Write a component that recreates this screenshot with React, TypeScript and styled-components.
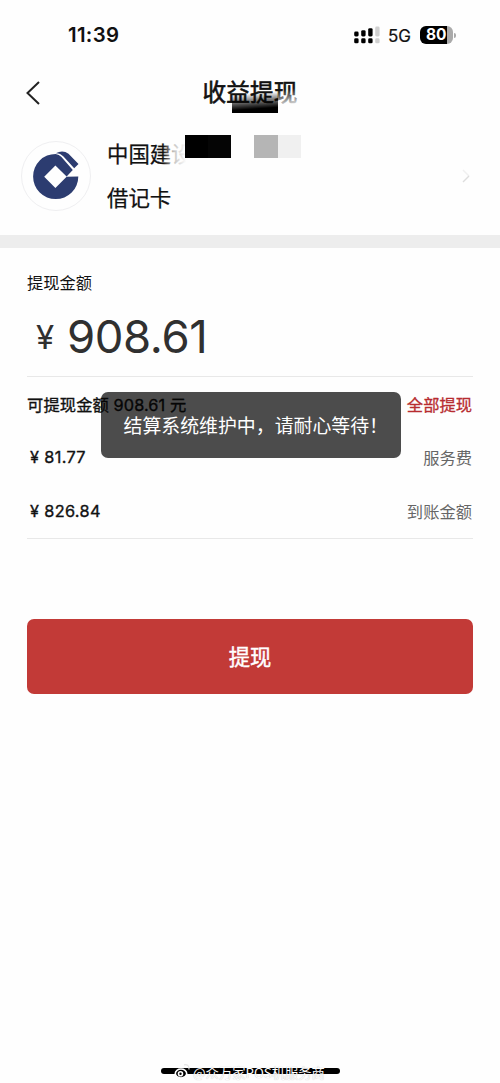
import React from "react";
import styled, { createGlobalStyle } from "styled-components";

const GlobalStyle = createGlobalStyle`
  * { box-sizing: border-box; }
  body {
    margin: 0;
    background: #fefefe;
    color: #111;
    font-family: Inter, "Noto Sans CJK SC", sans-serif;
  }
`;

const Screen = styled.main`
  position: relative;
  display: flex;
  flex-direction: column;
  width: 500px;
  height: 1083px;
  overflow: hidden;
  white-space: nowrap;
`;

const StatusBar = styled.header`
  display: flex;
  align-items: center;
  justify-content: space-between;
  height: 69px;
  padding: 0 43px 0 68px;
`;

const Clock = styled.time`
  font-size: 20.4px;
  font-weight: 600;
  letter-spacing: 0.3px;
`;

const StatusIcons = styled.div`
  display: flex;
  align-items: center;
`;

const Network = styled.span`
  margin: 2px 9px 0 8px;
  font-size: 17px;
  line-height: 20px;
  -webkit-text-stroke: 0.2px #111;
`;

const NavBar = styled.nav`
  display: grid;
  grid-template-columns: 60px 1fr 60px;
  align-items: center;
  height: 47px;
`;

const BackButton = styled.button`
  display: flex;
  padding: 0 0 0 25px;
  border: 0;
  background: none;
`;

const Title = styled.h1`
  position: relative;
  justify-self: center;
  margin: 0;
  font-size: 23.7px;
  line-height: 32px;
  font-weight: 400;
  -webkit-text-stroke: 0.6px #111;
`;

const TitleSmudge = styled.span`
  position: absolute;
  left: 29px;
  top: 13px;
  width: 46px;
  height: 23px;
  background: linear-gradient(176deg, transparent 18%, rgba(0, 0, 0, 0.45) 42%, #000 78%);
`;

const TitleFade = styled.span`
  position: absolute;
  left: 75px;
  top: 10px;
  width: 24px;
  height: 26px;
  background: linear-gradient(172deg, rgba(254, 254, 254, 0) 12%, #fefefe 76%);
`;

const BankCard = styled.section`
  display: flex;
  align-items: center;
  height: 119px;
  padding: 0 29px 0 21px;
`;

const BankLogo = styled.div`
  display: flex;
  width: 70px;
  height: 70px;
  margin-top: 1px;
  border: 1px solid #efeff1;
  border-radius: 50%;
`;

const BankInfo = styled.div`
  position: relative;
  flex: 1;
  display: flex;
  flex-direction: column;
  gap: 12px;
  margin-left: 16px;
`;

const BankText = styled.span`
  font-size: 21.4px;
  line-height: 32px;
  -webkit-text-stroke: 0.25px #111;
`;

const NameFade = styled.span`
  position: absolute;
  left: 56px;
  top: 0;
  width: 31px;
  height: 32px;
  background: linear-gradient(90deg, rgba(254, 254, 254, 0), rgba(254, 254, 254, 0.75) 35%, #fefefe 75%);
`;

const Redaction = styled.span<{ $left: number; $width: number; $fill: string }>`
  position: absolute;
  left: ${(p) => p.$left}px;
  top: -3px;
  width: ${(p) => p.$width}px;
  height: 23px;
  background: ${(p) => p.$fill};
`;

const Divider = styled.div`
  height: 13px;
  background: #ededed;
`;

const Form = styled.section`
  padding: 0 27px;
`;

const Label = styled.div`
  padding-top: 23px;
  font-size: 16.3px;
  line-height: 24px;
`;

const Amount = styled.div`
  display: flex;
  align-items: center;
  height: 81px;
  padding-top: 2px;
  color: #303030;
  font-size: 45.5px;
  letter-spacing: -0.4px;
`;

const Currency = styled.span`
  width: 40px;
  padding-left: 9px;
  font-size: 33px;
`;

const Details = styled.div`
  height: 163px;
  border: solid #e8e8e8;
  border-width: 1px 0;
`;

const DetailRow = styled.div`
  display: flex;
  align-items: center;
  justify-content: space-between;
  height: 53.5px;
`;

const Value = styled.span<{ $indent?: boolean }>`
  padding-left: ${(p) => (p.$indent ? 3 : 0)}px;
  font-size: 16.3px;
  letter-spacing: ${(p) => (p.$indent ? 0.35 : 0.1)}px;
  -webkit-text-stroke: 0.35px #111;
`;

const Note = styled.span<{ $accent?: boolean }>`
  padding-right: 1px;
  color: ${(p) => (p.$accent ? "#b72c30" : "#666")};
  font-size: 16.3px;
  -webkit-text-stroke: ${(p) => (p.$accent ? 0.3 : 0)}px currentColor;
`;

const SubmitButton = styled.button`
  width: 446px;
  height: 75px;
  margin: 80px 27px 0;
  padding: 0 0 3px;
  border: 0;
  border-radius: 7px;
  background: #c23a37;
  color: #fff;
  font: 400 21.3px Inter, "Noto Sans CJK SC", sans-serif;
  -webkit-text-stroke: 0.4px #fff;
`;

const Toast = styled.div`
  position: absolute;
  left: 101px;
  top: 392px;
  width: 300px;
  height: 66px;
  padding-left: 22.5px;
  border-radius: 7px;
  background: rgba(0, 0, 0, 0.7);
  color: #fff;
  font: 18.9px/65px "Noto Sans CJK SC", sans-serif;
`;

const HomeIndicator = styled.div`
  position: absolute;
  left: 161px;
  top: 1068px;
  width: 179px;
  height: 6px;
  border-radius: 3px;
  background: #000;
`;

const Watermark = styled.div`
  position: absolute;
  left: 174px;
  top: 1062px;
  display: flex;
  gap: 2px;
  color: #fff;
  font: 13.3px/21px "Noto Sans CJK SC", sans-serif;
  text-shadow: 0 0 1px rgba(0, 0, 0, 0.3);
`;

const Signal = () => (
  <svg width="26" height="18" viewBox="0 0 26 18">
    {[0, 7, 14, 21].map((x, i) => (
      <g key={x} fill={i === 3 ? "#d0d0d0" : "#000"}>
        <rect x={x + 0.2} y={[5.5, 4.2, 2.2, 0.5][i]} width="4.4" height={[5, 6.3, 8.3, 10][i]} rx="1.4" />
        <rect x={x + 0.2} y="12.3" width="4.4" height="5" rx="1.4" />
      </g>
    ))}
  </svg>
);

const BatteryShell = styled.div`
  position: relative;
  width: 33px;
  height: 18px;
  margin-right: 4px;
  border-radius: 6px;
  background: linear-gradient(90deg, #000 27px, #aaa 27px);
  color: #fff;
  font-size: 15.5px;
  font-weight: 700;
  line-height: 18px;
  padding-left: 6px;

  &::after {
    content: "";
    position: absolute;
    right: -3px;
    top: 7px;
    width: 2px;
    height: 5px;
    border-radius: 0 2px 2px 0;
    background: #aaa;
  }
`;

const CcbMark = () => (
  <svg width="68" height="68" viewBox="0 0 68 68" fill="#2c3c70">
    <path d="M56.3 34.5A22.6 22.6 0 1 1 33.7 11.9Q37 12.3 39.2 14.8L50.8 28L44.6 34.6L33.4 23.5L22.2 34.7L33.4 45.9L44.6 34.7Z" />
    <path d="M33.7 11.2Q41 7.6 46.5 11.8L56.5 22L52.2 26.2L41.5 14.6Q38.2 11 33.7 11.2Z" />
  </svg>
);

const WeiboMark = () => (
  <svg width="17" height="18" viewBox="0 0 17 18" fill="none" stroke="#fff" strokeWidth="1.6">
    <ellipse cx="7" cy="11.5" rx="5.7" ry="4.5" fill="#000" />
    <circle cx="6.5" cy="11.8" r="2" />
    <path d="M10 2.8Q15.5 2 15 7.5" stroke="#e4e4e4" strokeWidth="1.2" />
  </svg>
);

export default function App() {
  return (
    <Screen>
      <GlobalStyle />
      <StatusBar>
        <Clock>11:39</Clock>
        <StatusIcons>
          <Signal />
          <Network>5G</Network>
          <BatteryShell>80</BatteryShell>
        </StatusIcons>
      </StatusBar>
      <NavBar>
        <BackButton aria-label="返回">
          <svg width="16" height="26" viewBox="0 0 16 26" fill="none" stroke="#222" strokeWidth="2">
            <path d="M14 2L2.5 13L14 24" />
          </svg>
        </BackButton>
        <Title>
          收益提现
          <TitleSmudge />
          <TitleFade />
        </Title>
      </NavBar>
      <BankCard>
        <BankLogo>
          <CcbMark />
        </BankLogo>
        <BankInfo>
          <BankText>中国建设</BankText>
          <BankText>借记卡</BankText>
          <NameFade />
          <Redaction $left={78} $width={46} $fill="linear-gradient(90deg, #000 50%, #050505 50%)" />
          <Redaction $left={147} $width={47} $fill="linear-gradient(90deg, #b5b5b5 50%, #f0f0f0 50%)" />
        </BankInfo>
        <svg width="10" height="14" viewBox="0 0 10 14" fill="none" strokeWidth="1.5">
          <path d="M2 1L8 7" stroke="#f0f0f0" />
          <path d="M8 7L2 13" stroke="#ddd" />
        </svg>
      </BankCard>
      <Divider />
      <Form>
        <Label>提现金额</Label>
        <Amount>
          <Currency>¥</Currency>908.61
        </Amount>
        <Details>
          <DetailRow>
            <Value>可提现金额 908.61 元</Value>
            <Note $accent>全部提现</Note>
          </DetailRow>
          <DetailRow>
            <Value $indent>¥ 81.77</Value>
            <Note>服务费</Note>
          </DetailRow>
          <DetailRow>
            <Value $indent>¥ 826.84</Value>
            <Note>到账金额</Note>
          </DetailRow>
        </Details>
      </Form>
      <SubmitButton>提现</SubmitButton>
      <Toast>结算系统维护中，请耐心等待！</Toast>
      <HomeIndicator />
      <Watermark>
        <WeiboMark />
        @众万家POS机服务商
      </Watermark>
    </Screen>
  );
}
